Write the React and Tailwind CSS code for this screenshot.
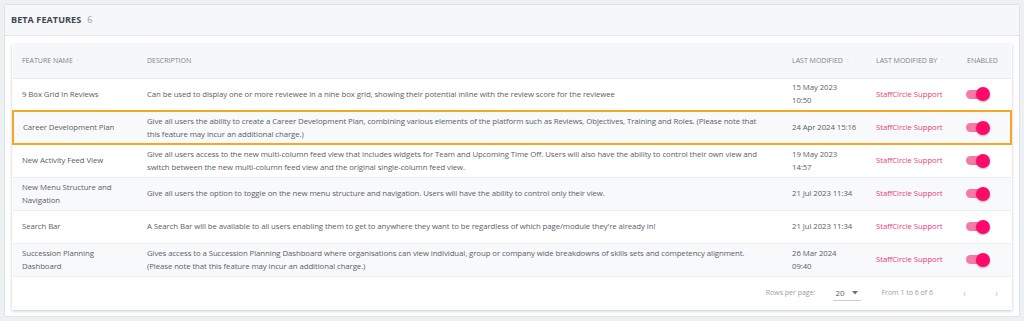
import React from "react";

const rows = [
  {
    name: "9 Box Grid In Reviews",
    desc: "Can be used to display one or more reviewee in a nine box grid, showing their potential inline with the review score for the reviewee",
    date: ["15 May 2023", "10:50"],
  },
  {
    name: "Career Development Plan",
    desc: "Give all users the ability to create a Career Development Plan, combining various elements of the platform such as Reviews, Objectives, Training and Roles. (Please note that this feature may incur an additional charge.)",
    date: ["24 Apr 2024 15:16"],
    highlight: true,
  },
  {
    name: "New Activity Feed View",
    desc: "Give all users access to the new multi-column feed view that includes widgets for Team and Upcoming Time Off. Users will also have the ability to control their own view and switch between the new multi-column feed view and the original single-column feed view.",
    date: ["19 May 2023", "14:57"],
  },
  {
    name: "New Menu Structure and Navigation",
    desc: "Give all users the option to toggle on the new menu structure and navigation. Users will have the ability to control only their view.",
    date: ["21 Jul 2023 11:34"],
  },
  {
    name: "Search Bar",
    desc: "A Search Bar will be available to all users enabling them to get to anywhere they want to be regardless of which page/module they're already in!",
    date: ["21 Jul 2023 11:34"],
  },
  {
    name: "Succession Planning Dashboard",
    desc: "Gives access to a Succession Planning Dashboard where organisations can view individual, group or company wide breakdowns of skills sets and competency alignment. (Please note that this feature may incur an additional charge.)",
    date: ["26 Mar 2024", "09:40"],
  },
];

function Toggle() {
  return (
    <div className="relative w-[24px] h-[14px] flex items-center">
      <div className="w-[22px] h-[9px] rounded-full bg-[#f57aa5]" />
      <div className="absolute right-0 top-0 w-[14px] h-[14px] rounded-full bg-[#ff0a6b] shadow-[0_1px_2px_rgba(0,0,0,0.3)]" />
    </div>
  );
}

function Arrow() {
  return <span className="ml-[3px] text-[7px] text-[#dcdfe2]">↑</span>;
}

export default function App() {
  return (
    <div
      className="w-[1024px] h-[321px] bg-[#eef1f4] p-[4px]"
      style={{ fontFamily: "'Open Sans', 'Noto Sans', sans-serif" }}
    >
      <div className="h-[313px] bg-white border border-[#dfe4e8] rounded-[2px] flex flex-col">
        <div className="h-[31px] bg-[#f6f7f9] border-b border-[#e3e7ea] flex items-center px-[6px] gap-[6px]">
          <span className="text-[9px] font-bold text-[#3d4650] tracking-[0.1px]">BETA FEATURES</span>
          <span className="text-[9px] text-[#9aa0a6]">6</span>
        </div>
        <div className="px-[7px] pt-[8px]">
          <div className="bg-white shadow-[0_1px_3px_rgba(0,0,0,0.22)]">
            <table className="w-[998px] table-fixed border-collapse text-[7.8px] tracking-[-0.08px] text-[#5b6167]">
              <colgroup>
                <col className="w-[125px]" />
                <col className="w-[645px]" />
                <col className="w-[84px]" />
                <col className="w-[91px]" />
                <col className="w-[53px]" />
              </colgroup>
              <thead>
                <tr className="h-[34px] bg-[#f6f7f8] border-b border-[#e6e8ea] text-[7px] tracking-normal text-[#7d848a] uppercase">
                  <th className="text-left font-normal pl-[9px]">
                    Feature Name<Arrow />
                  </th>
                  <th className="text-left font-normal pl-[9px]">Description</th>
                  <th className="text-left font-normal pl-[9px]">
                    Last Modified<Arrow />
                  </th>
                  <th className="text-left font-normal pl-[9px]">
                    Last Modified By<Arrow />
                  </th>
                  <th className="text-left font-normal pl-[9px]">Enabled</th>
                </tr>
              </thead>
              <tbody>
                {rows.map((r, i) => (
                  <tr
                    key={i}
                    className={
                      (i % 2 === 1 ? "bg-[#f8f9fa] " : "bg-white ") +
                      (r.highlight
                        ? "border-2 border-[#f7a823]"
                        : "border-b border-[#eceef0]")
                    }
                  >
                    <td className="pl-[9px] pr-[6px] h-[33px] leading-[13px] align-middle">{r.name}</td>
                    <td className="pl-[9px] pr-[20px] leading-[13px] align-middle">{r.desc}</td>
                    <td className="pl-[9px] leading-[13px] align-middle">
                      {r.date.map((d, j) => (
                        <div key={j} className="whitespace-nowrap">{d}</div>
                      ))}
                    </td>
                    <td className="pl-[9px] leading-[13px] align-middle text-[#ec3a7c] whitespace-nowrap">StaffCircle Support</td>
                    <td className="pl-[8px] align-middle">
                      <Toggle />
                    </td>
                  </tr>
                ))}
              </tbody>
            </table>
            <div className="h-[33px] flex items-center justify-end text-[7px] text-[#9aa0a6]">
              <span className="mr-[18px]">Rows per page:</span>
              <div className="relative flex items-center w-[28px] h-[16px] border-b border-[#c9cdd1] mr-[20px]">
                <span className="text-[8px] text-[#5b6167] ml-[2px]">20</span>
                <svg className="absolute right-[3px] top-[6px]" width="6" height="4" viewBox="0 0 6 4">
                  <path d="M0 0 L6 0 L3 3.5 Z" fill="#6b7177" />
                </svg>
              </div>
              <span className="mr-[30px]">From 1 to 6 of 6</span>
              <span className="text-[10px] text-[#c4c8cc] mr-[29px]">‹</span>
              <span className="text-[10px] text-[#c4c8cc] mr-[14px]">›</span>
            </div>
          </div>
        </div>
      </div>
    </div>
  );
}
